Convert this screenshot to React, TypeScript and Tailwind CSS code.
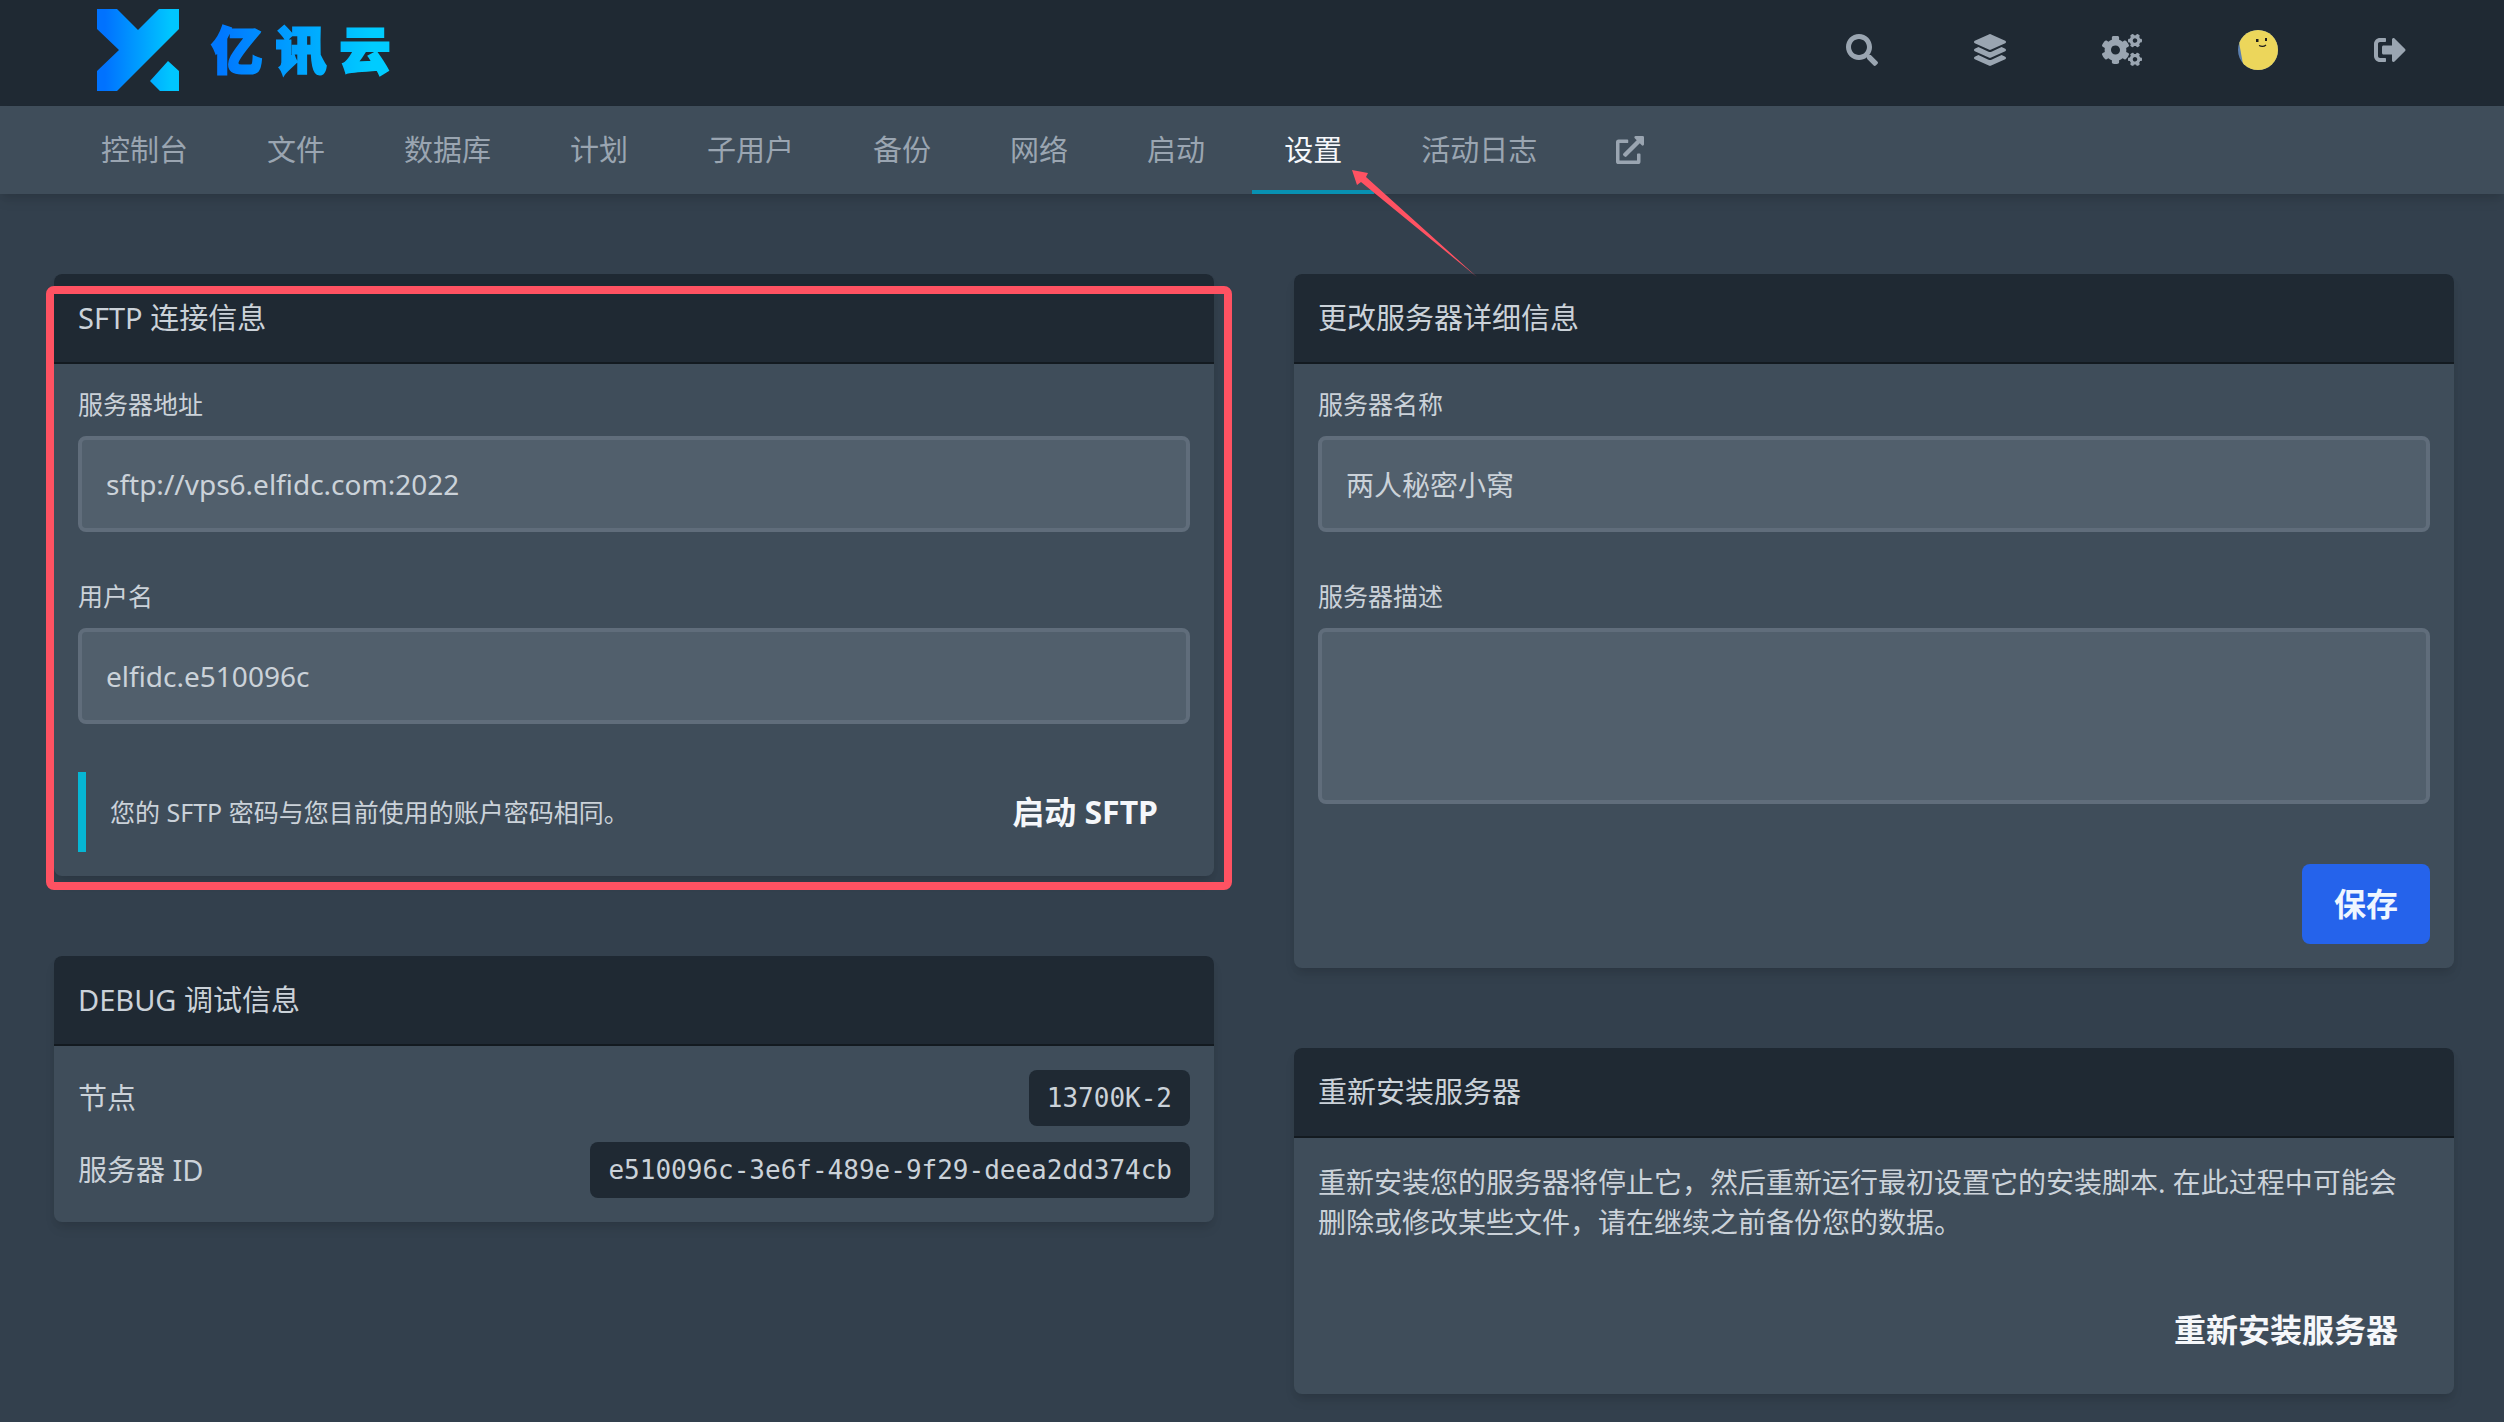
import type { ReactNode } from "react";
import clsx from "clsx";
import { FaCogs, FaExternalLinkAlt, FaLayerGroup, FaSearch, FaSignOutAlt } from "react-icons/fa";

const tabs = ["控制台", "文件", "数据库", "计划", "子用户", "备份", "网络", "启动", "设置", "活动日志"];
const activeTab = "设置";

const debugInfo = [
  { label: "节点", value: "13700K-2" },
  { label: "服务器 ID", value: "e510096c-3e6f-489e-9f29-deea2dd374cb" },
];

const fieldClass =
  "block w-full rounded-lg border-4 border-[#606d7b] bg-[#515f6c] px-6 text-[28px] leading-10 text-[#cbd2d9] outline-none resize-none";

function Logo() {
  return (
    <a href="#" aria-label="亿讯云">
      <svg width="300" height="82" viewBox="0 0 300 82">
        <defs>
          <linearGradient id="logo-mark" gradientUnits="userSpaceOnUse" x1="8" y1="0" x2="74" y2="0">
            <stop offset="0" stopColor="#0072ff" />
            <stop offset="1" stopColor="#00c6ff" />
          </linearGradient>
          <linearGradient id="logo-text" gradientUnits="userSpaceOnUse" x1="125" y1="0" x2="275" y2="0">
            <stop offset="0" stopColor="#0078ff" />
            <stop offset="1" stopColor="#00ccff" />
          </linearGradient>
        </defs>
        <path
          fill="url(#logo-mark)"
          d="M0 0H20L41 21L62 0H82V20L20 82H0V62L22 41L0 20ZM71 52L82 62V82H63L53 72Z"
        />
        <g fill="url(#logo-text)" stroke="url(#logo-text)" strokeWidth="3" fontSize="50" fontWeight="900">
          <text x="115" y="60">亿</text>
          <text x="179" y="60">讯</text>
          <text x="243" y="60">云</text>
        </g>
      </svg>
    </a>
  );
}

function Avatar() {
  return (
    <svg width="40" height="40" viewBox="0 0 40 40">
      <defs>
        <clipPath id="avatar-clip">
          <circle cx="20" cy="20" r="20" />
        </clipPath>
      </defs>
      <g clipPath="url(#avatar-clip)">
        <rect width="40" height="40" fill="#5b7fae" />
        <path d="M1 12L6 40H40V0H0Z" fill="#ecd65b" />
        <rect x="18" y="9" width="2.500" height="3" fill="#1c1c1c" />
        <rect x="27" y="8" width="2" height="3" fill="#1c1c1c" />
        <path d="M21 15.500Q25 17.500 28 15" fill="none" stroke="#1c1c1c" strokeWidth="1.200" />
      </g>
    </svg>
  );
}

function NavIcon({ label, children }: { label: string; children: ReactNode }) {
  return (
    <a href="#" aria-label={label} className="flex h-full items-center px-12 text-[#9aa5b1]">
      {children}
    </a>
  );
}

function Card({ title, children }: { title: string; children: ReactNode }) {
  return (
    <section className="rounded-lg bg-[#3f4d5a] shadow-[0_8px_12px_-2px_rgba(0,0,0,0.1),0_4px_8px_-2px_rgba(0,0,0,0.06)]">
      <h2 className="rounded-t-lg border-b-2 border-[#131a20] bg-[#1f2933] p-6 text-[29px] leading-10">{title}</h2>
      <div className="p-6">{children}</div>
    </section>
  );
}

function Label({ htmlFor, children }: { htmlFor: string; children: ReactNode }) {
  return (
    <label htmlFor={htmlFor} className="mb-4 block text-[25px] leading-8">
      {children}
    </label>
  );
}

// Tapered arrow pointing at the active tab
function Arrow() {
  return (
    <svg className="pointer-events-none absolute top-16 left-[100px] z-10" width="126" height="108" viewBox="0 0 126 108">
      <path d="M0 0L16 3L14 7L125 107L9 12L5 15Z" fill="#ff5262" />
    </svg>
  );
}

export default function App() {
  return (
    <div className="min-h-screen bg-[#33404d] font-['Noto_Sans','Noto_Sans_CJK_SC',sans-serif] text-[#cbd2d9]">
      <header className="flex h-[106px] items-center justify-between bg-[#1f2933] pr-[50px] pb-1.5 pl-[97px]">
        <Logo />
        <div className="flex h-full items-center">
          <NavIcon label="搜索">
            <FaSearch size={32} />
          </NavIcon>
          <NavIcon label="服务器">
            <FaLayerGroup size={32} />
          </NavIcon>
          <NavIcon label="管理">
            <FaCogs size={40} />
          </NavIcon>
          <NavIcon label="账户">
            <Avatar />
          </NavIcon>
          <NavIcon label="退出">
            <FaSignOutAlt size={32} />
          </NavIcon>
        </div>
      </header>

      <nav className="flex h-[88px] gap-[15px] bg-[#3f4d5a] pl-[69px] text-[29px] leading-10 text-[#9aa5b1] shadow-[0_8px_12px_-2px_rgba(0,0,0,0.1),0_4px_8px_-2px_rgba(0,0,0,0.06)]">
        {tabs.map((tab) => (
          <div key={tab} className="relative flex">
            <a
              href="#"
              className={clsx(
                "flex items-center px-8 whitespace-nowrap",
                tab === activeTab && "text-[#f5f7fa] shadow-[inset_0_-4px_#0891b2]"
              )}
            >
              {tab}
            </a>
            {tab === activeTab && <Arrow />}
          </div>
        ))}
        <a href="#" aria-label="在管理面板中打开" className="flex items-center px-8">
          <FaExternalLinkAlt size={28} />
        </a>
      </nav>

      <main className="grid grid-cols-2 items-start gap-20 pt-20 pr-[50px] pb-7 pl-[54px]">
        <div className="flex flex-col gap-20">
          <div className="relative">
            <Card title="SFTP 连接信息">
              <Label htmlFor="sftp-address">服务器地址</Label>
              <input id="sftp-address" readOnly value="sftp://vps6.elfidc.com:2022" className={clsx(fieldClass, "mb-12 h-24")} />
              <Label htmlFor="sftp-user">用户名</Label>
              <input id="sftp-user" readOnly value="elfidc.e510096c" className={clsx(fieldClass, "mb-12 h-24")} />
              <div className="flex h-20 items-center justify-between border-l-8 border-[#06b6d4] pl-6">
                <p className="text-[25px] leading-8">您的 SFTP 密码与您目前使用的账户密码相同。</p>
                <button className="h-full px-8 text-[32px] leading-10 font-bold text-[#f5f7fa]">启动 SFTP</button>
              </div>
            </Card>
            {/* Highlight frame */}
            <div className="pointer-events-none absolute top-3 -right-[18px] -bottom-3.5 -left-2 rounded-lg border-8 border-[#ff5262]" />
          </div>

          <Card title="DEBUG 调试信息">
            <dl className="flex flex-col gap-4">
              {debugInfo.map((row) => (
                <div key={row.label} className="flex items-center justify-between text-[29px] leading-10">
                  <dt>{row.label}</dt>
                  <dd className="h-14 rounded-lg bg-[#1f2933] px-[18px] font-['DejaVu_Sans_Mono',monospace] text-[26px] leading-[56px]">
                    {row.value}
                  </dd>
                </div>
              ))}
            </dl>
          </Card>
        </div>

        <div className="flex flex-col gap-20">
          <Card title="更改服务器详细信息">
            <Label htmlFor="server-name">服务器名称</Label>
            <input id="server-name" defaultValue="两人秘密小窝" className={clsx(fieldClass, "mb-12 h-24")} />
            <Label htmlFor="server-description">服务器描述</Label>
            <textarea id="server-description" className={clsx(fieldClass, "h-44 py-6")} />
            <div className="mt-[60px] flex justify-end">
              <button className="h-20 rounded-lg bg-[#2563eb] px-8 text-[32px] leading-10 font-bold text-[#eff6ff]">保存</button>
            </div>
          </Card>

          <Card title="重新安装服务器">
            <p className="pr-2 text-[28px] leading-10">
              重新安装您的服务器将停止它，然后重新运行最初设置它的安装脚本. 在此过程中可能会删除或修改某些文件，请在继续之前备份您的数据。
            </p>
            <div className="mt-12 flex justify-end">
              <button className="h-20 px-8 text-[32px] leading-10 font-bold text-[#f5f7fa]">重新安装服务器</button>
            </div>
          </Card>
        </div>
      </main>
    </div>
  );
}
